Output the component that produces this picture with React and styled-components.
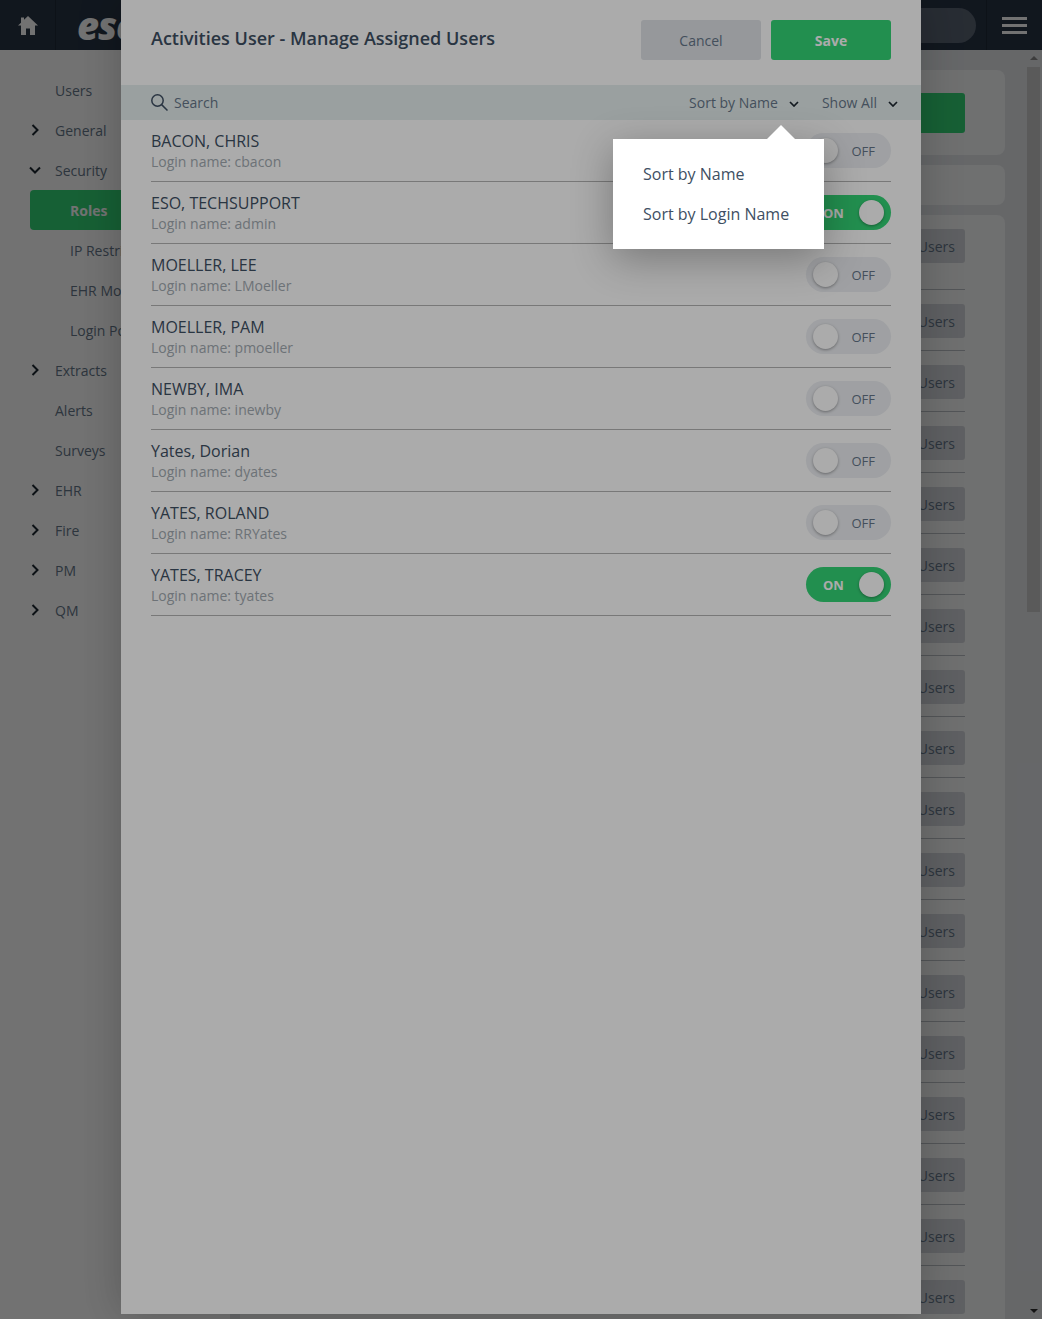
import React from 'react'
import styled, { createGlobalStyle } from 'styled-components'

const GlobalStyle = createGlobalStyle`
html, body {
  margin: 0;
  padding: 0;
  height: 100%;
  overflow: hidden;
  font-family: "Open Sans", "Liberation Sans", sans-serif;
}
* { box-sizing: border-box; }
`

const Page = styled.div`
position: relative;
width: 100%;
height: 100vh;
overflow: hidden;
background: #e3e6e9;
display: flex;
flex-direction: column;
`

const TopBar = styled.header`
height: 50px;
flex: none;
display: flex;
align-items: center;
background: #283545;
color: #fff;
`

const HomeCell = styled.div`
width: 56px;
height: 100%;
display: flex;
align-items: center;
justify-content: center;
border-right: 1px solid #1f2a37;
`

const Logo = styled.div`
margin-left: 21px;
font-size: 38px;
font-weight: 800;
font-style: italic;
letter-spacing: -1px;
line-height: 50px;
flex: 1;
`

const TopSearch = styled.div`
width: 300px;
height: 35px;
margin-right: 10px;
border-radius: 18px;
background: #5a6474;
`

const MenuCell = styled.div`
width: 56px;
height: 100%;
display: flex;
flex-direction: column;
justify-content: center;
align-items: center;
gap: 4px;
border-left: 1px solid #1f2a37;
`

const MenuBar = styled.span`
width: 25px;
height: 3px;
background: #fff;
`

const Body = styled.div`
flex: 1;
min-height: 0;
display: flex;
`

const Sidebar = styled.nav`
width: 230px;
flex: none;
background: #fff;
padding-top: 20px;
`

const NavItem = styled.div`
height: 40px;
margin-left: ${props => (props.$sub ? '30px' : '0')};
padding-left: ${props => (props.$sub ? '40px' : '55px')};
display: flex;
align-items: center;
position: relative;
font-size: 14px;
font-weight: ${props => (props.$active ? 700 : 400)};
color: ${props => (props.$active ? '#fff' : '#66778a')};
background: ${props => (props.$active ? '#34d577' : 'transparent')};
border-radius: ${props => (props.$active ? '4px' : '0')};
`

const NavChevron = styled.svg`
position: absolute;
left: 29px;
top: 14px;
width: 12px;
height: 12px;
fill: none;
stroke: #1d2731;
stroke-width: 2;
`

const Main = styled.main`
flex: 1;
min-width: 0;
padding: 20px 22px 0 10px;
display: flex;
flex-direction: column;
gap: 10px;
`

const Card = styled.section`
background: #f8f9fa;
border-radius: 8px;
flex: none;
display: flex;
justify-content: flex-end;
padding: ${props => props.$padding || '0 40px'};
height: ${props => props.$height || 'auto'};
`

const RowsCard = styled(Card)`
flex: 1;
flex-direction: column;
justify-content: flex-start;
padding: 14px 40px 0;
`

const AddButton = styled.div`
width: 140px;
height: 40px;
border-radius: 3px;
background: #34d577;
`

const UsersRow = styled.div`
height: 61px;
flex: none;
padding-bottom: 12px;
display: flex;
justify-content: flex-end;
border-bottom: 1px solid #b9bec4;
margin-bottom: 0;
& + & { padding-top: 14px; height: 61px; }
`

const UsersButton = styled.div`
height: 34px;
padding: 0 10px;
display: flex;
align-items: center;
border-radius: 3px;
background: #d2d6db;
font-size: 14px;
color: #66778a;
`

const Scrollbar = styled.div`
width: 15px;
flex: none;
margin-right: 0;
position: relative;
display: flex;
flex-direction: column;
align-items: center;
padding-top: 17px;
`

const ScrollThumb = styled.div`
width: 13px;
height: 545px;
margin-right: 2px;
background: #c9c9c9;
`

const ScrollArrow = styled.span`
position: absolute;
left: 3px;
width: 0;
height: 0;
border-left: 4px solid transparent;
border-right: 4px solid transparent;
${props => (props.$down
    ? 'bottom: 6px; border-top: 4px solid #2f2f2f;'
    : 'top: 6px; border-bottom: 4px solid #8a8a8a;')}
`

const Backdrop = styled.div`
position: absolute;
inset: 0;
background: rgba(0, 0, 0, 0.33);
`

const Modal = styled.div`
position: absolute;
left: 121px;
top: 0;
width: 800px;
height: 1314px;
background: #fff;
box-shadow: 0 0 40px rgba(0, 0, 0, 0.22);
display: flex;
flex-direction: column;
`

const ModalHeader = styled.div`
height: 85px;
flex: none;
padding: 20px 30px 0;
display: flex;
align-items: flex-start;
gap: 10px;
`

const ModalTitle = styled.h1`
flex: 1;
margin: 0;
font-size: 18px;
font-weight: 600;
line-height: 37px;
color: #3e4f63;
`

const Button = styled.button`
width: 120px;
height: 40px;
border: 0;
border-radius: 3px;
font-family: inherit;
font-size: 14px;
font-weight: ${props => (props.$primary ? 700 : 400)};
color: ${props => (props.$primary ? '#fff' : '#66778a')};
background: ${props => (props.$primary ? '#34d577' : '#e0e3e7')};
`

const FilterBar = styled.div`
height: 35px;
flex: none;
padding: 0 23px 0 30px;
display: flex;
align-items: center;
background: #e6efef;
font-size: 14px;
color: #66778a;
`

const SearchLabel = styled.span`
flex: 1;
margin-left: 6px;
`

const SearchIcon = styled.svg`
width: 17px;
height: 17px;
fill: none;
stroke: #3e4f63;
stroke-width: 1.5;
`

const FilterOption = styled.div`
display: flex;
align-items: center;
gap: 11px;
margin-left: 23px;
`

const SmallChevron = styled.svg`
width: 10px;
height: 6px;
margin-top: 2px;
fill: none;
stroke: #1d2731;
stroke-width: 1.7;
`

const UserList = styled.div`
padding: 0 30px;
`

const UserRow = styled.div`
height: 62px;
padding-top: 11px;
display: flex;
justify-content: space-between;
border-bottom: 1px solid #b3b3b3;
`

const UserName = styled.div`
font-size: 16px;
font-weight: 500;
line-height: 20px;
color: #3e4f63;
`

const LoginName = styled.div`
margin-top: 1px;
font-size: 14px;
line-height: 20px;
color: #a3abb2;
`

const Toggle = styled.div`
width: 85px;
height: 35px;
margin-top: 2px;
border-radius: 18px;
padding: 0 7px;
display: flex;
align-items: center;
justify-content: space-between;
flex-direction: ${props => (props.$on ? 'row-reverse' : 'row')};
background: ${props => (props.$on ? '#34d577' : '#edeff3')};
`

const Knob = styled.span`
width: 25px;
height: 25px;
border-radius: 50%;
background: #fff;
box-shadow: 0 1px 3px rgba(0, 0, 0, 0.35);
`

const ToggleLabel = styled.span`
font-size: 13px;
margin: 0 9px 0 0;
font-weight: ${props => (props.$on ? 700 : 400)};
color: ${props => (props.$on ? '#fff' : '#66778a')};
${props => props.$on && 'margin: 0 0 0 10px;'}
`

const Popover = styled.div`
position: absolute;
left: 613px;
top: 139px;
width: 211px;
height: 110px;
padding: 15px 30px;
background: #fff;
box-shadow: 0 10px 40px rgba(0, 0, 0, 0.3);
&::before {
  content: "";
  position: absolute;
  left: 154px;
  top: -14px;
  border-left: 14px solid transparent;
  border-right: 14px solid transparent;
  border-bottom: 14px solid #fff;
}
`

const PopoverItem = styled.div`
height: 40px;
display: flex;
align-items: center;
font-size: 16px;
white-space: nowrap;
color: #3e4f63;
`

const navItems = [
  { label: 'Users' },
  { label: 'General', chevron: 'right' },
  { label: 'Security', chevron: 'down' },
  { label: 'Roles', sub: true, active: true },
  { label: 'IP Restrictions', sub: true },
  { label: 'EHR Mobile', sub: true },
  { label: 'Login Policy', sub: true },
  { label: 'Extracts', chevron: 'right' },
  { label: 'Alerts' },
  { label: 'Surveys' },
  { label: 'EHR', chevron: 'right' },
  { label: 'Fire', chevron: 'right' },
  { label: 'PM', chevron: 'right' },
  { label: 'QM', chevron: 'right' },
]

const users = [
  { name: 'BACON, CHRIS', login: 'cbacon' },
  { name: 'ESO, TECHSUPPORT', login: 'admin', on: true },
  { name: 'MOELLER, LEE', login: 'LMoeller' },
  { name: 'MOELLER, PAM', login: 'pmoeller' },
  { name: 'NEWBY, IMA', login: 'inewby' },
  { name: 'Yates, Dorian', login: 'dyates' },
  { name: 'YATES, ROLAND', login: 'RRYates' },
  { name: 'YATES, TRACEY', login: 'tyates', on: true },
]

const HomeIcon = () => (
  <svg width="20" height="19" viewBox="0 0 20 19" fill="#fff">
    <path d="M10 0 L20 9.5 L17 9.5 L17 19 L12 19 L12 12.5 L8 12.5 L8 19 L3 19 L3 9.5 L0 9.5 L3 6.7 L3 1.5 L6 1.5 L6 3.8 Z" />
  </svg>
)

const Chevron = () => (
  <SmallChevron viewBox="0 0 10 6"><path d="M1 1 L5 5 L9 1" /></SmallChevron>
)

const App = () => {
  return (
    <Page>
      <GlobalStyle />
      <TopBar>
        <HomeCell><HomeIcon /></HomeCell>
        <Logo>eso</Logo>
        <TopSearch />
        <MenuCell>
          <MenuBar />
          <MenuBar />
          <MenuBar />
        </MenuCell>
      </TopBar>
      <Body>
        <Sidebar>
          {navItems.map((item) => (
            <NavItem key={item.label} $sub={item.sub} $active={item.active}>
              {item.chevron === 'right' && (
                <NavChevron viewBox="0 0 12 12"><path d="M3.5 1 L8.5 6 L3.5 11" /></NavChevron>
              )}
              {item.chevron === 'down' && (
                <NavChevron viewBox="0 0 12 12"><path d="M1 3.5 L6 8.5 L11 3.5" /></NavChevron>
              )}
              {item.label}
            </NavItem>
          ))}
        </Sidebar>
        <Main>
          <Card $height="85px" $padding="23px 40px 0"><AddButton /></Card>
          <Card $height="40px" />
          <RowsCard>
            {Array.from({ length: 18 }, (_, i) => (
              <UsersRow key={i}><UsersButton>Manage Users</UsersButton></UsersRow>
            ))}
          </RowsCard>
        </Main>
        <Scrollbar>
          <ScrollArrow />
          <ScrollThumb />
          <ScrollArrow $down />
        </Scrollbar>
      </Body>

      <Backdrop />
      <Modal>
        <ModalHeader>
          <ModalTitle>Activities User - Manage Assigned Users</ModalTitle>
          <Button>Cancel</Button>
          <Button $primary>Save</Button>
        </ModalHeader>
        <FilterBar>
          <SearchIcon viewBox="0 0 17 17">
            <circle cx="6.5" cy="6.5" r="5.7" />
            <path d="M10.6 10.6 L16.5 16.5" />
          </SearchIcon>
          <SearchLabel>Search</SearchLabel>
          <FilterOption>Sort by Name <Chevron /></FilterOption>
          <FilterOption>Show All <Chevron /></FilterOption>
        </FilterBar>
        <UserList>
          {users.map((user) => (
            <UserRow key={user.name}>
              <div>
                <UserName>{user.name}</UserName>
                <LoginName>Login name: {user.login}</LoginName>
              </div>
              <Toggle $on={user.on}>
                <Knob />
                <ToggleLabel $on={user.on}>{user.on ? 'ON' : 'OFF'}</ToggleLabel>
              </Toggle>
            </UserRow>
          ))}
        </UserList>
      </Modal>

      <Backdrop />
      <Popover>
        <PopoverItem>Sort by Name</PopoverItem>
        <PopoverItem>Sort by Login Name</PopoverItem>
      </Popover>
    </Page>
  )
}

export default App
